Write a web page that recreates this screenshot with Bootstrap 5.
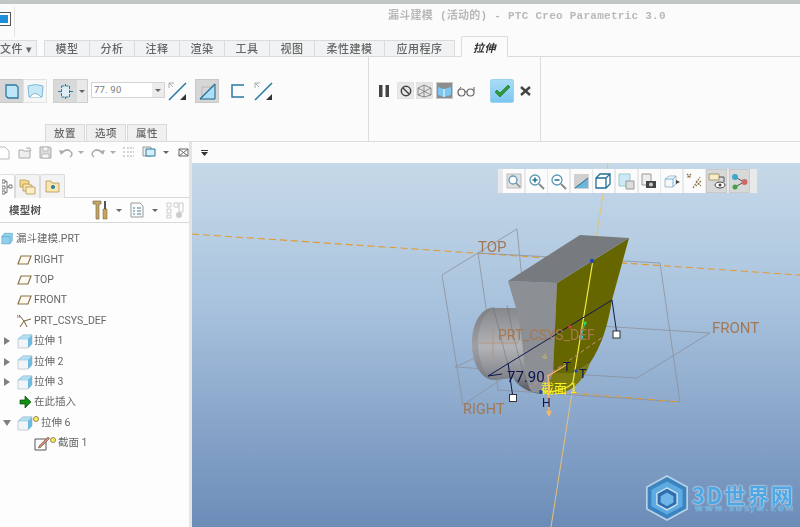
<!DOCTYPE html>
<html lang="zh-CN">
<head>
<meta charset="utf-8">
<title>漏斗建模 - PTC Creo Parametric 3.0</title>
<link rel="stylesheet" href="https://cdn.jsdelivr.net/npm/bootstrap@5.3.0/dist/css/bootstrap.min.css">
<style>
html,body{width:800px;height:527px;overflow:hidden;background:#fbfbfb}
body{font-family:"Noto Sans CJK SC","Liberation Sans",sans-serif;font-size:10.5px;color:#555}
svg{display:block;flex:none}
.app-frame{width:800px;height:527px;filter:blur(.35px)}
.top-strip{height:4px;background:#c3c6c6;flex:none}
.title-row{height:33px;flex:none;position:relative}
.app-ico{width:11px;height:14px;margin-top:8px;border-right:1px solid #555;border-top:1px solid #555;border-bottom:1px solid #555;background:#fff;padding:2px 2px 2px 0}
.app-ico i{display:block;width:100%;height:100%;background:#1d8fd8}
.title-sep{width:1px;height:30px;background:#e3e3e3;margin:3px 0 0 3px}
.title-text{font-family:"Liberation Mono","Noto Sans CJK SC",monospace;font-weight:700;font-size:11px;letter-spacing:.26px;color:#b9b9b9;margin:4px 0 0 373px;white-space:nowrap}
.tab-row{height:20px;flex:none;border-bottom:1px solid #d9dbdc;align-items:flex-end;flex-wrap:nowrap}
.ribbon-tab.nav-link{height:16px;padding:0;border:0;border-right:1px solid #d9dbdc;border-top:1px solid #d9dbdc;border-radius:0;background:#f1f2f3;color:#666;font-size:11px;line-height:15px;text-align:center;font-weight:500;letter-spacing:.5px}
.tab-file.nav-link{width:37px;margin-right:7px;border-left:0;text-align:left}
.ribbon-tab.w44{width:45px}.ribbon-tab.w70{width:70px}
.ribbon-tab.first{border-left:1px solid #d9dbdc;width:46px}
.tab-active.nav-link{width:47px;height:21px;margin-left:6px;margin-bottom:-1px;background:#fbfbfb;border:1px solid #d9dbdc;border-bottom-color:#fbfbfb;border-radius:2px 2px 0 0;font-style:italic;font-weight:700;color:#333;line-height:20px}
.ribbon-body{height:85px;flex:none;position:relative;border-bottom:1px solid #dcdcdc}
.group-one{width:369px;border-right:1px solid #dcdcdc;padding-top:22px}
.group-two{width:172px;border-right:1px solid #dcdcdc;padding:22px 0 0 10px}
.rb-btn{width:24px;height:24px;display:flex;align-items:center;justify-content:center;flex:none;background:#f6f6f6;border:1px solid #e2e2e2}
.rb-btn.on{background:#d6d6d6;border-color:#c8c8c8}
.rb-split{width:35px;margin-left:6px;background:#d8d9d9;border:1px solid #cfcfcf;height:24px;display:flex;flex:none}
.rb-split>div:first-child{width:23px;display:flex;align-items:center;justify-content:center}
.rb-split>div:last-child{flex:1;background:#e9e9e9;display:flex;align-items:center;justify-content:center}
.caret-d{width:0;height:0;border-left:3px solid transparent;border-right:3px solid transparent;border-top:3px solid #666;flex:none}
.depth-box{width:74px;height:16px;margin:3px 2px 0 3px;flex:none;display:flex;border:1px solid #d4d4d4;background:#fff;color:#777;font:9.5px/14px Roboto,sans-serif;letter-spacing:.2px}
.depth-box span{flex:1;padding-left:2px;white-space:pre}
.depth-box b{width:12px;background:#ececec;display:flex;align-items:center;justify-content:center}
.ic-plain{width:22px;height:24px;display:flex;align-items:center;justify-content:center;flex:none}
.sub-tabs{position:absolute;left:45px;bottom:0;height:17px}
.sub-tab{width:40px;height:17px;background:#f0f0f0;border:1px solid #d9d9d9;border-bottom:0;margin-right:1px;text-align:center;font-weight:500;font-size:10.5px;line-height:16px;color:#666;letter-spacing:.6px}
.ok-btn{width:24px;height:24px;margin-left:15px;background:linear-gradient(#a8dcf6,#7cc6f0);border:1px solid #9cd3ef;border-radius:2px;display:flex;align-items:center;justify-content:center;flex:none}
.main-row{height:385px;flex:none}
.left-pane{width:192px;flex:none;border-right:3px solid #e4e4e4;background:#fdfdfd}
.quick-bar{height:21px;flex:none;border-bottom:0}
.pane-tabs{height:35px;flex:none;padding-top:11px;border-bottom:1px solid #d8d8d8}
.pane-tab{width:25px;height:24px;background:#f3f3f3;border:1px solid #dcdcdc;border-bottom:0;border-radius:2px 2px 0 0;display:flex;align-items:center;justify-content:center;flex:none}
.pane-tab.cur{width:15px;background:#fdfdfd;border-left:0}
.tree-head{height:25px;flex:none;border-bottom:1px solid #d8d8d8;font-weight:700;color:#555;font-size:10.5px;padding-left:9px}
.tree-head>span{width:83px;letter-spacing:.3px}
.tree-list{padding:6px 0 0 0;margin:0;list-style:none}
.tree-row{height:20.4px;display:flex;align-items:center;white-space:nowrap;color:#666;font-size:10.5px}
.lat{font-family:Roboto,"Noto Sans CJK SC",sans-serif;font-size:10.5px}
.exp{width:17px;flex:none;display:flex;justify-content:center;padding-left:0}
.ar-r{width:0;height:0;border-top:4px solid transparent;border-bottom:4px solid transparent;border-left:6px solid #808080;margin-left:-3px}
.ar-d{width:0;height:0;border-left:4px solid transparent;border-right:4px solid transparent;border-top:6px solid #808080;margin-left:-3px}
.tree-ico{width:16px;height:16px;margin-right:0;flex:none}
.tree-row .lbl{margin-left:1px}
.star{width:6px;height:6px;background:#fff04a;border:1px solid #8d8a6b;border-radius:50%;margin:-7px 1px 0 0;flex:none}
.view-col{flex:1;min-width:0}
.view-bar{height:21px;flex:none;padding-left:9px;background:#fbfbfb}
.scene{flex:1;position:relative;background:linear-gradient(#c6d9e8,#a9c3de 38%,#6c8cb8);overflow:hidden}
.scene>svg.world{position:absolute;left:0;top:0}
.v-tools{position:absolute;left:306px;top:6px;height:24px;width:259px;background:#e7e9ea;padding-left:5px;gap:1.6px}
.v-btn{width:21px;height:24px;background:#fbfbfb;display:flex;align-items:center;justify-content:center;flex:none}
.v-btn.on{background:#d7d8d8;border:1px solid #c9c9c9}
.logo-mark{position:absolute;left:453px;top:310px}
.logo-main{position:absolute;left:500px;top:320px;font:700 22px/23px "Noto Sans CJK SC",sans-serif;letter-spacing:1.5px;color:#4ea7e2;text-shadow:0 0 2px #d7e7f4,0 0 2px #d7e7f4;white-space:nowrap;height:23px}
.logo-sub{position:absolute;left:503px;top:343px;font:700 7px/7px "DejaVu Sans",sans-serif;letter-spacing:2.2px;color:#5aa9dc;text-shadow:0 0 1px #e3eef7;white-space:nowrap}
</style>
</head>
<body>
<svg width="0" height="0" style="position:absolute">
<defs>
<symbol id="cube" viewBox="0 0 16 16"><path d="M1 6 6 2h9v9l-4 4H1z" fill="#f2f5f7" stroke="#b9c3c9" stroke-width=".8"/><path d="M1 6 6 2h9l-4 4z" fill="#b4dff2" stroke="#8fc5dd" stroke-width=".6"/><path d="M11 6l4-4v9l-4 4z" fill="#6dbbe0"/></symbol>
<symbol id="plane" viewBox="0 0 16 16"><path d="M4 4h10l-3 8H1z" fill="#fbf8ef" stroke="#8a744c" stroke-width="1.2"/></symbol>
</defs>
</svg>
<div class="app-frame d-flex flex-column">
  <div class="top-strip"></div>
  <div class="title-row d-flex">
    <div class="app-ico"><i></i></div>
    <div class="title-sep"></div>
    <div class="title-text">漏斗建模 (活动的) - PTC Creo Parametric 3.0</div>
  </div>
  <ul class="nav tab-row">
    <li><a class="nav-link ribbon-tab tab-file" href="#">文件 ▾</a></li>
    <li><a class="nav-link ribbon-tab first" href="#">模型</a></li>
    <li><a class="nav-link ribbon-tab w44" href="#">分析</a></li>
    <li><a class="nav-link ribbon-tab w44" href="#">注释</a></li>
    <li><a class="nav-link ribbon-tab w44" href="#">渲染</a></li>
    <li><a class="nav-link ribbon-tab w44" href="#">工具</a></li>
    <li><a class="nav-link ribbon-tab w44" href="#">视图</a></li>
    <li><a class="nav-link ribbon-tab w70" href="#">柔性建模</a></li>
    <li><a class="nav-link ribbon-tab w70" href="#">应用程序</a></li>
    <li><a class="nav-link ribbon-tab tab-active" href="#">拉伸</a></li>
  </ul>
  <div class="ribbon-body d-flex">
    <div class="group-one d-flex">
      <div class="rb-btn on" style="border-left:0"><svg width="16" height="17" viewBox="0 0 16 17"><path d="M2 2h10l2 2v11H4l-2-2z" fill="#bfe6f7" stroke="#2a7aa3" stroke-width="1.3"/></svg></div>
      <div class="rb-btn" style="margin-left:-1px"><svg width="17" height="16" viewBox="0 0 17 16"><path d="M1 3Q8 0 16 3l-1 11H2z" fill="#c8e8f6" stroke="#7fb8d3"/><path d="M3 14Q8 7 14 14" fill="#fff" stroke="#7fb8d3"/></svg></div>
      <div class="rb-split">
        <div><svg width="17" height="15" viewBox="0 0 17 15"><path d="M1 7.500h3M13 7.500h3M4.500 2h8v11h-8zM8.500 0v2M8.500 13v2" fill="#dfeef5" stroke="#2a7aa3" stroke-dasharray="3 1"/></svg></div>
        <div><i class="caret-d"></i></div>
      </div>
      <div class="depth-box"><span>77. 90</span><b><i class="caret-d"></i></b></div>
      <div class="ic-plain" style="width:20px"><svg width="19" height="19" viewBox="0 0 19 19"><path d="M1 18 18 1" stroke="#2a7aa3" stroke-width="1.6"/><path d="M1 1h5M1 1v5M1 1l4 4" stroke="#aaa" fill="none"/><path d="M18 18h-6l6-6z" fill="#333"/></svg></div>
      <div class="rb-btn on" style="margin-left:8px"><svg width="17" height="17" viewBox="0 0 17 17"><path d="M16 1v15H1z" fill="#a9e0f7"/><path d="M3 4h13v12H3z" fill="none" stroke="#b9b9b9"/><path d="M1 16 16 1" stroke="#1f6f96" stroke-width="1.3"/><path d="M1 16h15V1" fill="none" stroke="#1f6f96"/></svg></div>
      <div class="ic-plain" style="margin-left:8px;width:22px"><svg width="14" height="14" viewBox="0 0 14 14"><path d="M13 1H1v12h12" fill="none" stroke="#2a7aa3" stroke-width="1.5"/></svg></div>
      <div class="ic-plain" style="width:20px;margin-left:4px"><svg width="19" height="19" viewBox="0 0 19 19"><path d="M1 18 18 1" stroke="#2a7aa3" stroke-width="1.6"/><path d="M1 1h5M1 1v5M1 1l4 4" stroke="#aaa" fill="none"/><path d="M18 18h-6l6-6z" fill="#333"/></svg></div>
    </div>
    <div class="group-two d-flex">
      <div class="ic-plain" style="width:18px;justify-content:flex-start"><svg width="10" height="12" viewBox="0 0 10 12"><path d="M0 0h3.500v12H0zM6.500 0H10v12H6.500z" fill="#444"/></svg></div>
      <div class="rb-btn" style="width:17px;height:17px;margin-top:3px;background:#e9e9e9"><svg width="12" height="12" viewBox="0 0 12 12"><circle cx="6" cy="6" r="4.700" fill="none" stroke="#444" stroke-width="1.500"/><path d="M2.700 2.700 9.300 9.300" stroke="#444" stroke-width="1.500"/></svg></div>
      <div class="rb-btn" style="width:17px;height:17px;margin:3px 0 0 2px;background:#e5e5e5"><svg width="15" height="14" viewBox="0 0 15 14"><path d="M1 4 7 1l7 3v7l-7 2-6-2zM7 1v12M1 4l13 7M14 4 1 11" fill="none" stroke="#777" stroke-width=".8"/></svg></div>
      <div class="rb-btn on" style="width:17px;height:17px;margin:3px 0 0 3px;background:#8d8d8d"><svg width="15" height="14" viewBox="0 0 15 14"><path d="M1 3l6 2 7-2v8l-7 2-6-2z" fill="#7cc6ef"/><path d="M7 5v8" stroke="#fff"/></svg></div>
      <div class="ic-plain" style="margin-left:3px;width:19px"><svg width="18" height="11" viewBox="0 0 18 11"><circle cx="4.500" cy="6.500" r="3.500" fill="none" stroke="#666" stroke-width="1.200"/><circle cx="13.500" cy="6.500" r="3.500" fill="none" stroke="#666" stroke-width="1.200"/><path d="M8 6q1-1 2 0M1 5l3-4M17 5V1" fill="none" stroke="#666"/></svg></div>
      <div class="ok-btn"><svg width="17" height="14" viewBox="0 0 17 14"><path d="M1 8l2-2 3 3 8-8 2 2L6 13z" fill="#2e9a35" stroke="#1e6e25" stroke-width=".6"/></svg></div>
      <div class="ic-plain" style="margin-left:2px;width:18px"><svg width="11" height="10" viewBox="0 0 11 10"><path d="M1 1l9 8M10 1 1 9" stroke="#444" stroke-width="2.400"/></svg></div>
    </div>
    <div class="sub-tabs d-flex">
      <div class="sub-tab">放置</div><div class="sub-tab">选项</div><div class="sub-tab">属性</div>
    </div>
  </div>
  <div class="main-row d-flex">
    <div class="left-pane d-flex flex-column">
      <div class="quick-bar d-flex align-items-center">
        <svg class="ms-0" width="10" height="14" viewBox="0 0 10 14"><path d="M0 1h5l4 4v8H0" fill="#fff" stroke="#bbb"/></svg>
        <svg class="ms-2" width="14" height="12" viewBox="0 0 14 12"><path d="M1 11V3h4l1 1h6v7zM8 1h4l1 3" fill="#eee" stroke="#aaa"/></svg>
        <svg style="margin-left:7px" width="13" height="13" viewBox="0 0 13 13"><path d="M1 1h10l1 1v10H1z" fill="#ddd" stroke="#aaa"/><path d="M4 1h5v4H4zM3 8h7v4H3z" fill="#f7f7f7" stroke="#aaa" stroke-width=".7"/></svg>
        <svg style="margin-left:7px" width="14" height="10" viewBox="0 0 14 10"><path d="M3 5Q7 0 11 3t0 6" fill="none" stroke="#aaa" stroke-width="1.500"/><path d="M0 2l5 1-3 4z" fill="#aaa"/></svg>
        <i class="caret-d" style="margin-left:5px;border-top-color:#aaa"></i>
        <svg style="margin-left:7px" width="14" height="10" viewBox="0 0 14 10"><path d="M11 5Q7 0 3 3t0 6" fill="none" stroke="#aaa" stroke-width="1.500"/><path d="M14 2L9 3l3 4z" fill="#aaa"/></svg>
        <i class="caret-d" style="margin-left:5px;border-top-color:#aaa"></i>
        <svg style="margin-left:6px" width="13" height="13" viewBox="0 0 13 13"><path d="M1 2h2M1 6h2M1 10h2M5 2h7M5 6h7M5 10h7" stroke="#aaa" stroke-dasharray="2 1"/></svg>
        <svg style="margin-left:7px" width="14" height="13" viewBox="0 0 14 13"><path d="M1 1h8v9H1z" fill="#eee" stroke="#999"/><path d="M4 3h9v7H4z" fill="#d6eef8" stroke="#2a7aa3"/></svg>
        <i class="caret-d" style="margin-left:7px"></i>
        <svg style="margin-left:9px" width="11" height="9" viewBox="0 0 11 9"><path d="M1 1h9v7H1zM1 1l9 7M10 1 1 8" fill="none" stroke="#666"/></svg>
      </div>
      <div class="pane-tabs d-flex">
        <div class="pane-tab cur"><svg width="11" height="16" viewBox="0 0 11 16"><path d="M0 1h3v3H0zM0 7h3v3H0zM0 12h3v3H0zM7 6h3v3H7zM3 2.500h2v11H3M5 8h2" fill="#fff" stroke="#777"/></svg></div>
        <div class="pane-tab"><svg width="17" height="17" viewBox="0 0 17 17"><path d="M1 2h6l1 1h2v6H1z" fill="#f5d98c" stroke="#a98a45" stroke-width=".7"/><path d="M4 6h6l1 1h2v6H4z" fill="#f7e2a6" stroke="#a98a45" stroke-width=".7"/><path d="M7 9h9v7H7z" fill="#fbeec5" stroke="#a98a45" stroke-width=".7"/></svg></div>
        <div class="pane-tab"><svg width="15" height="13" viewBox="0 0 15 13"><path d="M1 1h5l1 2h7v9H1z" fill="#f8e6b0" stroke="#a98a45" stroke-width=".7"/><circle cx="8" cy="7" r="2" fill="#2a7aa3"/></svg></div>
      </div>
      <div class="tree-head d-flex align-items-center">
        <span>模型树</span>
        <svg width="16" height="20" viewBox="0 0 16 20"><path d="M1 1h8v3H7v15H4V4H1z" fill="#c6a768" stroke="#6b5a35" stroke-width=".6"/><path d="M12 1h2v8h-2z" fill="#555"/><path d="M11 9h4v10h-4z" fill="#caa45c" stroke="#6b5a35" stroke-width=".5"/></svg>
        <i class="caret-d ms-2"></i>
        <svg class="ms-2" width="14" height="16" viewBox="0 0 14 16"><path d="M1 1h9l3 3v11H1z" fill="#fafafa" stroke="#999"/><path d="M3 6h2M7 6h4M3 9h2M7 9h4M3 12h2M7 12h4" stroke="#4a7f95"/></svg>
        <i class="caret-d" style="margin-left:8px"></i>
        <svg class="ms-2" width="18" height="17" viewBox="0 0 18 17"><path d="M1 1h4v4H1zM1 7h4v4H1zM1 13h4v3H1zM8 1h4v4H8zM13 1h4v9h-4z" fill="none" stroke="#ccc"/><circle cx="13" cy="13" r="3" fill="#ccc"/></svg>
      </div>
      <ul class="tree-list">
        <li class="tree-row"><svg class="tree-ico" style="margin:0 -1px 0 1px;width:13px" viewBox="0 0 16 16"><path d="M1 5 4 1h10v9l-3 4H1z" fill="#8fd0ef" stroke="#5aa0c0" stroke-width=".7"/><path d="M1 5h10v9" fill="none" stroke="#5aa0c0" stroke-width=".7"/></svg><span class="lbl lat" style="margin-left:3px">漏斗建模.PRT</span></li>
        <li class="tree-row"><span class="exp"></span><svg class="tree-ico"><use href="#plane"/></svg><span class="lbl lat">RIGHT</span></li>
        <li class="tree-row"><span class="exp"></span><svg class="tree-ico"><use href="#plane"/></svg><span class="lbl lat">TOP</span></li>
        <li class="tree-row"><span class="exp"></span><svg class="tree-ico"><use href="#plane"/></svg><span class="lbl lat">FRONT</span></li>
        <li class="tree-row"><span class="exp"></span><svg class="tree-ico" viewBox="0 0 16 16"><path d="M2 2l5 6 7-2M7 8l-4 6M7 8l3 6" fill="none" stroke="#7a5f36"/><text x="0" y="5" font-size="4" fill="#444">N</text></svg><span class="lbl lat">PRT_CSYS_DEF</span></li>
        <li class="tree-row"><span class="exp"><i class="ar-r"></i></span><svg class="tree-ico"><use href="#cube"/></svg><span class="lbl lat">拉伸 1</span></li>
        <li class="tree-row"><span class="exp"><i class="ar-r"></i></span><svg class="tree-ico"><use href="#cube"/></svg><span class="lbl lat">拉伸 2</span></li>
        <li class="tree-row"><span class="exp"><i class="ar-r"></i></span><svg class="tree-ico"><use href="#cube"/></svg><span class="lbl lat">拉伸 3</span></li>
        <li class="tree-row"><span class="exp"></span><svg class="tree-ico" viewBox="0 0 16 16"><path d="M3 6h5V2l6 6-6 6v-4H3z" fill="#139016" stroke="#0a4d0c" stroke-width=".7"/></svg><span class="lbl lat">在此插入</span></li>
        <li class="tree-row"><span class="exp"><i class="ar-d"></i></span><svg class="tree-ico"><use href="#cube"/></svg><i class="star"></i><span class="lbl lat">拉伸 6</span></li>
        <li class="tree-row"><span class="exp" style="width:34px"></span><svg class="tree-ico" viewBox="0 0 16 16"><path d="M1 4h11v11H1z" fill="#fff" stroke="#555"/><path d="M5 11 14 2l1.500 1.500-9 9-2 .5z" fill="#d98a6b" stroke="#555" stroke-width=".6"/></svg><i class="star"></i><span class="lbl lat">截面 1</span></li>
      </ul>
    </div>
    <div class="view-col d-flex flex-column">
      <div class="view-bar d-flex align-items-center"><svg width="7" height="6" viewBox="0 0 7 6"><path d="M0 0h7v1H0zM0 2h7L3.500 6z" fill="#333"/></svg></div>
      <div class="scene">
        <svg class="world" width="608" height="364" viewBox="192 163 608 364">
          <defs>
            <linearGradient id="cyl2" x1="0" x2="0" y1="0" y2="1"><stop offset="0" stop-color="#85878b"/><stop offset=".45" stop-color="#b2b4b8"/><stop offset=".8" stop-color="#82858a"/><stop offset="1" stop-color="#4b4e56"/></linearGradient>
          </defs>
          <path d="M192 234 800 275" stroke="#e59a2c" stroke-width="1.100" stroke-dasharray="7 4" fill="none"/>
          <path d="M608 163 551 527" stroke="#e3c27a" stroke-width="1" fill="none"/>
          <g fill="none" stroke="#8c8f97" stroke-width=".9" opacity=".85">
            <path d="M478 253 660 263 680 402 498 390z"/>
            <path d="M455 367 553 323 710 333 637 378z"/>
            <path d="M442 275 517 229 530 360 463 405z"/>
          </g>
          <path d="M516 308H495C480 307 472 325 472 343 472 362 480 380 495 380L513 378C520 390 535 394 545 394L565 392 553 373 516 308z" fill="url(#cyl2)"/>
          <path d="M472 343C472 325 480 307 495 307 484 312 478 326 478 343 478 360 484 376 495 380 480 380 472 362 472 343z" fill="#6f7276" opacity=".3"/>
          <path d="M508 281 557 283 553 373 545 394 532 392C522 380 526 345 516 308z" fill="#8c8f94"/>
          <path d="M557 283 629 238 612 300C608 325 602 345 590 363L573 373H553z" fill="#666600"/>
          <path d="M553 373H573L590 363C585 378 575 388 565 392L545 394z" fill="#7a7a10"/>
          <path d="M508 281 580 235 629 238 557 283z" fill="#777a7f"/>
          <path d="M507 305C512 330 518 360 530 390M493 307C500 330 505 360 513 378" fill="none" stroke="#5f6266" stroke-width=".6" opacity=".7"/>
          <g fill="none" stroke="#c08a62" stroke-width=".8" opacity=".8"><path d="M478 343h40M493 330v28"/></g>
          <path d="M593 260 573 382C570 388 555 393 541 392" stroke="#f2ee3a" stroke-width="1.200" fill="none"/>
          <path d="M523 392 603 337" stroke="#c98b8b" stroke-dasharray="4 3" fill="none"/>
          <path d="M560 392 680 402" stroke="#e59a2c" stroke-dasharray="7 4" fill="none"/>
          <path d="M488 376 612 300M488 376l14-2M612 300l5 35M508 363l5 35" fill="none" stroke="#10184f" stroke-width="1"/>
          <rect x="613" y="331" width="7" height="7" fill="#fff" stroke="#333"/>
          <rect x="509.500" y="394.500" width="7" height="7" fill="#fff" stroke="#333"/>
          <path d="M548 375 549 414M548 376 566 365" stroke="#f3b66a" stroke-width="1.400" fill="none"/>
          <path d="M546 411h6l-3 6z" fill="#f3b66a"/>
          <circle cx="570" cy="327" r="1.800" fill="#d83a3a"/><circle cx="585" cy="323" r="1.800" fill="#30d030"/><circle cx="581" cy="337" r="2.200" fill="#28d5dd"/>
          <path d="M585 323 581 337" stroke="#28d5dd" stroke-width=".8"/>
          <circle cx="592" cy="261" r="2.200" fill="#2248b8"/><circle cx="576" cy="371" r="1.800" fill="#2248b8"/><circle cx="541" cy="392" r="2" fill="#2248b8"/>
          <path d="M545 354v6M542 357h6" stroke="#d8c94a" stroke-width=".9" stroke-dasharray="2 1"/>
          <g font-family="Roboto,sans-serif" fill="#a27855">
            <text x="478" y="252" font-size="15">TOP</text>
            <text x="712" y="333" font-size="15">FRONT</text>
            <text x="463" y="414" font-size="14.500">RIGHT</text>
            <text x="498" y="340" font-size="14" fill="#a8774f">PRT_CSYS_DEF</text>
            <text x="507" y="382" font-size="15" fill="#0b1350">77.90</text>
            <text x="563" y="371" font-size="13" fill="#0b1350">T</text>
            <text x="579" y="378" font-size="13" fill="#0b1350">T</text>
            <text x="542" y="407" font-size="12" fill="#0b1350">H</text>
            <text x="541" y="393" font-size="13" fill="#f6f21e" font-family="Noto Sans CJK SC,sans-serif">截面 1</text>
          </g>
        </svg>
        <div class="v-tools d-flex">
          <div class="v-btn"><svg width="16" height="16" viewBox="0 0 16 16"><path d="M1 1h14v14H1z" fill="#e2e2e2" stroke="#bbb"/><circle cx="7" cy="7" r="4" fill="#fff" stroke="#5f9ab8" stroke-width="1.300"/><path d="M10 10l4 4" stroke="#888" stroke-width="1.500"/></svg></div>
          <div class="v-btn"><svg width="17" height="17" viewBox="0 0 17 17"><circle cx="7" cy="7" r="5" fill="#fff" stroke="#5f9ab8" stroke-width="1.300"/><path d="M4.500 7h5M7 4.500v5" stroke="#1f6f96" stroke-width="1.500"/><path d="M11 11l5 5" stroke="#888" stroke-width="1.800"/></svg></div>
          <div class="v-btn"><svg width="17" height="17" viewBox="0 0 17 17"><circle cx="7" cy="7" r="5" fill="#fff" stroke="#5f9ab8" stroke-width="1.300"/><path d="M4.500 7h5" stroke="#1f6f96" stroke-width="1.500"/><path d="M11 11l5 5" stroke="#888" stroke-width="1.800"/></svg></div>
          <div class="v-btn"><svg width="15" height="15" viewBox="0 0 15 15"><path d="M0 0h15v15H0z" fill="#d0d0d0"/><path d="M1 14 14 4v10z" fill="#6cb6dc"/><path d="M1 14 14 4" stroke="#1f6f96"/></svg></div>
          <div class="v-btn"><svg width="17" height="17" viewBox="0 0 17 17"><path d="M1 5 5 1h10v10l-4 4H1z" fill="#fff" stroke="#1f6f96" stroke-width="1.300"/><path d="M1 5h10v10M11 5l4-4" fill="none" stroke="#1f6f96" stroke-width="1.300"/></svg></div>
          <div class="v-btn"><svg width="17" height="17" viewBox="0 0 17 17"><path d="M1 1h11v12H1z" fill="#cfe8f5" stroke="#9cc"/><path d="M8 8h8v8H8z" fill="#ddd" stroke="#999"/></svg></div>
          <div class="v-btn"><svg width="16" height="16" viewBox="0 0 16 16"><path d="M1 1h9v11H1z" fill="#eee" stroke="#999"/><path d="M5 8h10v7H5z" fill="#444"/><circle cx="10" cy="11.500" r="2" fill="#ccc"/></svg></div>
          <div class="v-btn"><svg width="16" height="15" viewBox="0 0 16 15"><path d="M1 5l4-3h7v8l-3 3H1z" fill="#f5f8fa" stroke="#a9bcc6"/><path d="M1 5h8v8M9 5l3-3" fill="none" stroke="#6cb6dc"/><path d="M12 6l4 2-4 2z" fill="#444"/></svg></div>
          <div class="v-btn"><svg width="17" height="17" viewBox="0 0 17 17"><path d="M1 1l4 4M5 1 1 5M7 15l7-11M10 8l5 5M15 8l-5 5" stroke="#8a744c" stroke-width="1.200" stroke-dasharray="2 1"/></svg></div>
          <div class="v-btn on"><svg width="18" height="18" viewBox="0 0 18 18"><path d="M1 2h10v6H1z" fill="#f7ecc7" stroke="#a59a75"/><path d="M11 5h5v5" fill="none" stroke="#555"/><ellipse cx="12" cy="13" rx="5" ry="3" fill="#fff" stroke="#444"/><circle cx="12" cy="13" r="1.500" fill="#444"/></svg></div>
          <div class="v-btn on"><svg width="17" height="17" viewBox="0 0 17 17"><path d="M4 4 13 9 4 14" fill="none" stroke="#555"/><circle cx="4" cy="4" r="3" fill="#3fa7c9"/><circle cx="13.500" cy="9" r="3" fill="#c96b6b"/><circle cx="4" cy="14" r="2.500" fill="#46a046"/></svg></div>
        </div>
        <svg class="logo-mark" width="44" height="50" viewBox="0 0 48 50"><path d="M24 1 46 13v24L24 49 2 37V13z" fill="#3c83c2" stroke="#b9d2e6" stroke-width="1.800"/><path d="M24 7 41 16v18L24 43 7 34V16z" fill="#5eabe2"/><path d="M24 14 35 20v12L24 38 13 32V20z" fill="#2f6eae" stroke="#cfe3f1" stroke-width="1.500"/><path d="M24 19 31 23v7l-7 4-7-4v-7z" fill="#6fb6ea"/></svg>
        <div class="logo-main">3D世界网</div>
        <div class="logo-sub">WWW.3DSJW.COM</div>
      </div>
    </div>
  </div>
</div>
<script src="https://cdn.jsdelivr.net/npm/bootstrap@5.3.0/dist/js/bootstrap.bundle.min.js"></script>
</body>
</html>
